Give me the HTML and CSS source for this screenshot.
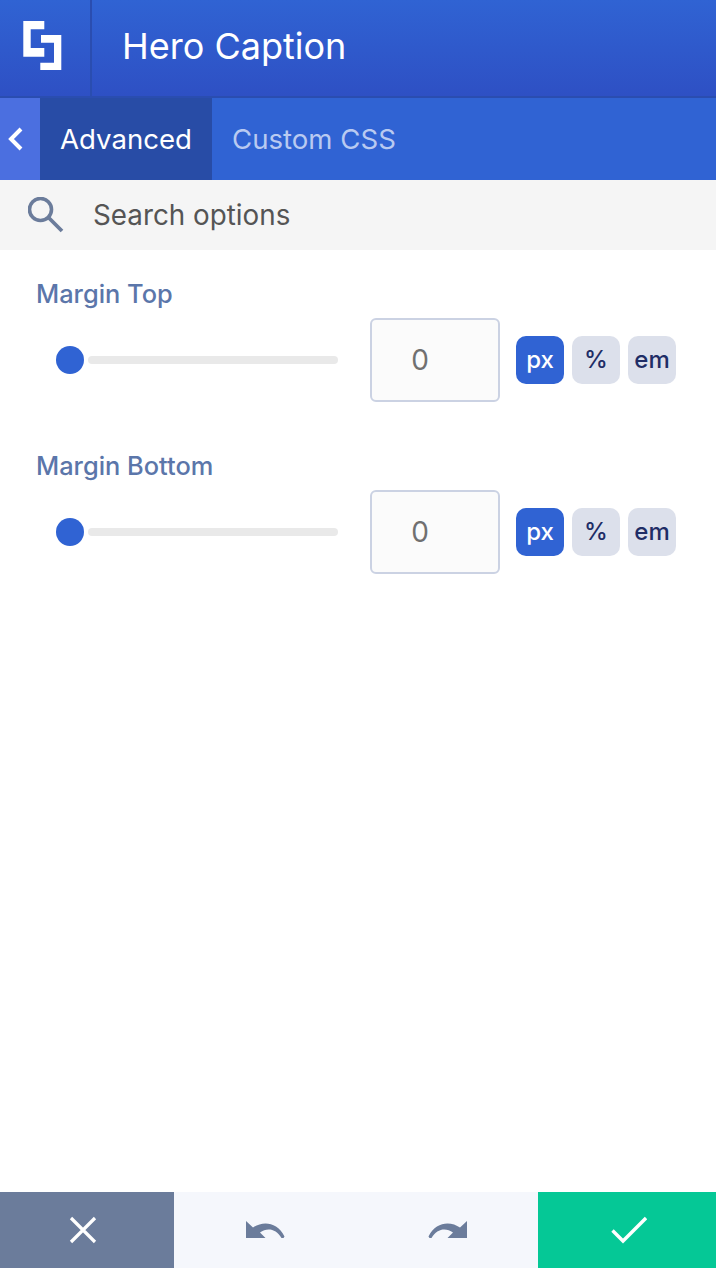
FILE: index.html
```html
<!DOCTYPE html>
<html>
<head>
<title>Hero Caption</title>
<link rel="stylesheet" href="styles.css">
</head>
<body>
<div class="panel">
    <div class="header">
        <div class="logoBox">
            <svg width="39" height="49" viewBox="0 0 39 49"><path fill="#fff" d="M0.300 0H21.300V8.300H7.700V27H21.300V35.700H0.300Z"/><path fill="#fff" d="M18 14H38.300V49H17.300V41.700H31V21.700H18Z"/></svg>
        </div>
        <div class="title">Hero Caption</div>
    </div>
    <div class="tabs">
        <div class="backTab">
            <svg width="16" height="24" viewBox="0 0 16 24"><path fill="none" stroke="#fff" stroke-width="4" d="M14 2L4 12L14 22"/></svg>
        </div>
        <div class="tab activeTab">Advanced</div>
        <div class="tab">Custom CSS</div>
    </div>
    <div class="search">
        <svg width="36" height="36" viewBox="0 0 36 36"><circle cx="12.500" cy="12.500" r="11" fill="none" stroke="#6b7c9b" stroke-width="3.600"/><path stroke="#6b7c9b" stroke-width="3.800" d="M20.500 20.500L34 34"/></svg>
        <span>Search options</span>
    </div>
    <div class="options">
        <div class="option">
            <div class="optionLabel">Margin Top</div>
            <div class="optionRow">
                <div class="slider"><div class="knob"></div><div class="track"></div></div>
                <div class="numberBox">0</div>
                <div class="units"><div class="unit activeUnit">px</div><div class="unit">%</div><div class="unit">em</div></div>
            </div>
        </div>
        <div class="option">
            <div class="optionLabel">Margin Bottom</div>
            <div class="optionRow">
                <div class="slider"><div class="knob"></div><div class="track"></div></div>
                <div class="numberBox">0</div>
                <div class="units"><div class="unit activeUnit">px</div><div class="unit">%</div><div class="unit">em</div></div>
            </div>
        </div>
    </div>
    <div class="footer">
        <div class="footBtn cancelBtn">
            <svg width="28" height="28" viewBox="0 0 28 28"><path stroke="#fff" stroke-width="3.200" d="M2 2L26 26M26 2L2 26"/></svg>
        </div>
        <div class="footBtn historyBtn">
            <svg width="39" height="18" viewBox="0 0 39 18"><path fill="#6b7c9b" d="M0 0L7 6.500C16 0 31 0 38.500 15.500L37.500 17H35.500C30 7.500 21 6.500 14 11.500L19.500 17H0Z"/></svg>
        </div>
        <div class="footBtn historyBtn">
            <svg width="39" height="18" viewBox="0 0 39 18"><path fill="#6b7c9b" d="M39 0L32 6.500C23 0 8 0 0.500 15.500L1.500 17H3.500C9 7.500 18 6.500 25 11.500L19.500 17H39Z"/></svg>
        </div>
        <div class="footBtn saveBtn">
            <svg width="36" height="28" viewBox="0 0 36 28"><path fill="none" stroke="#fff" stroke-width="3.400" d="M1.500 14.500L12 25L35 2"/></svg>
        </div>
    </div>
</div>
</body>
</html>
```

FILE: styles.css
```css
html, body {
    margin: 0;
    padding: 0;
    background-color: white;
}
.panel {
    width: 716px;
    height: 1268px;
    display: flex;
    flex-direction: column;
    font-family: Inter, "Liberation Sans", sans-serif;
    overflow: hidden;
}
.header {
    height: 96px;
    display: flex;
    align-items: stretch;
    background: linear-gradient(#3063d3, #2e50c4);
    border-bottom: 2px solid #2a4db0;
}
.logoBox {
    width: 92px;
    border-right: 2px solid #2a4db0;
    padding: 21px 0 0 23px;
    box-sizing: border-box;
}
.title {
    margin-left: 30px;
    font-size: 36px;
    line-height: 92px;
    color: white;
}
.tabs {
    height: 82px;
    display: flex;
    background-color: #3063d3;
}
.backTab {
    width: 40px;
    display: flex;
    align-items: center;
    padding-left: 7px;
    box-sizing: border-box;
    background-color: #4b6fe0;
}
.tab {
    padding: 0 20px;
    font-size: 27.600px;
    line-height: 83px;
    color: #b9caf1;
}
.activeTab {
    background-color: #284ca6;
    color: white;
}
.search {
    height: 70px;
    display: flex;
    align-items: center;
    padding-left: 28px;
    background-color: #f5f5f5;
    font-size: 27.800px;
    color: #555;
}
.search span {
    margin-left: 29px;
}
.options {
    flex: 1;
    padding: 29px 40px 0 36px;
}
.option {
    margin-bottom: 49px;
}
.optionLabel {
    font-size: 25.400px;
    font-weight: 500;
    line-height: 30px;
    color: #5b76aa;
}
.optionRow {
    margin-top: 9px;
    display: flex;
    align-items: center;
}
.slider {
    width: 282px;
    margin-left: 20px;
    display: flex;
    align-items: center;
}
.knob {
    width: 28px;
    height: 28px;
    border-radius: 50%;
    background-color: #3063d3;
}
.track {
    flex: 1;
    height: 8px;
    margin-left: 4px;
    border-radius: 4px;
    background-color: #e9e9e9;
}
.numberBox {
    width: 130px;
    height: 84px;
    margin-left: 32px;
    box-sizing: border-box;
    border: 2px solid #cbd2e3;
    border-radius: 6px;
    background-color: #fbfbfb;
    padding-right: 30px;
    text-align: center;
    font-size: 28px;
    line-height: 80px;
    color: #707070;
}
.units {
    display: flex;
    gap: 8px;
    margin-left: 16px;
}
.unit {
    width: 48px;
    height: 48px;
    border-radius: 10px;
    background-color: #dce0eb;
    text-align: center;
    font-size: 24px;
    font-weight: 500;
    line-height: 48px;
    color: #1f2d66;
}
.activeUnit {
    background-color: #3063d3;
    color: white;
}
.footer {
    height: 76px;
    display: flex;
}
.footBtn {
    display: flex;
    align-items: center;
    justify-content: center;
    box-sizing: border-box;
}
.cancelBtn {
    width: 174px;
    padding-right: 8px;
    background-color: #6b7c9b;
}
.historyBtn {
    width: 182px;
    background-color: #f5f7fc;
}
.saveBtn {
    width: 178px;
    padding-left: 3px;
    background-color: #05c896;
}
```
